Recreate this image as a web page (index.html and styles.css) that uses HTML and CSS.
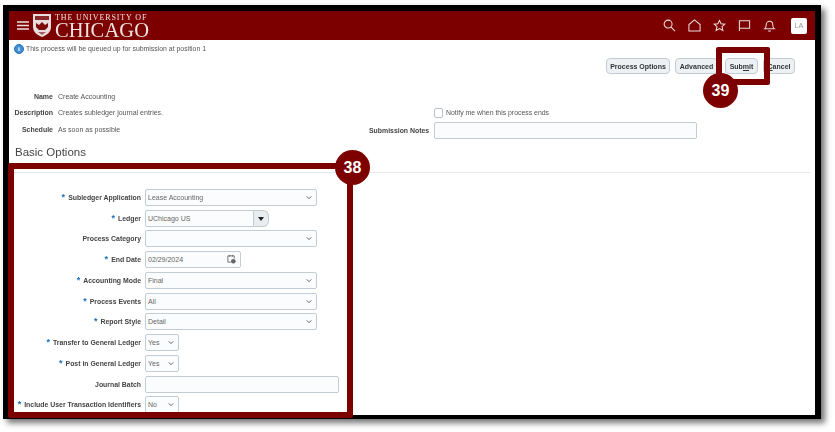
FILE: index.html
```html
<!DOCTYPE html>
<html lang="en">
<head>
<meta charset="utf-8">
<title>Create Accounting</title>
<link rel="stylesheet" href="styles.css">
</head>
<body>
<div class="frame">
  <header class="topbar">
    <div class="brand">
      <svg class="burger" viewBox="0 0 12 9"><path d="M0 1h12M0 4.500h12M0 8h12" stroke="#efe3e3" stroke-width="1.300" fill="none"/></svg>
      <svg class="crest" viewBox="0 0 20 25">
        <path d="M1 1h18v13c0 5-4 8-9 10C5 22 1 19 1 14z" fill="#e9dcdc"/>
        <path d="M3 3h14v4H3z" fill="#8a2a2a"/>
        <path d="M4 10l3 2 3-3 3 3 3-2v4l-3 3h-6l-3-3z" fill="#7c0a0a"/>
        <path d="M6 19h8l-4 3z" fill="#a56060"/>
      </svg>
      <div class="wordmark">
        <span class="wm-top">THE UNIVERSITY OF</span>
        <span class="wm-main">CHICAGO</span>
      </div>
    </div>
    <div class="tools">
      <svg class="tool" viewBox="0 0 14 14"><circle cx="5.500" cy="5.500" r="4.300"/><path d="M8.700 8.700L13 13"/></svg>
      <svg class="tool" viewBox="0 0 14 14"><path d="M1 13V6l6-5 6 5v7z"/></svg>
      <svg class="tool" viewBox="0 0 14 14"><path d="M7 1.500l1.700 3.700 4 .4-3 2.700.9 4L7 10.300l-3.600 2 .9-4-3-2.700 4-.4z"/></svg>
      <svg class="tool" viewBox="0 0 14 14"><path d="M1.500 13V2h11v8h-11"/></svg>
      <svg class="tool" viewBox="0 0 14 14"><path d="M2 10.500c1.500-1 1.500-2.500 1.500-4.500a3.500 3.500 0 0 1 7 0c0 2 0 3.500 1.500 4.500zM5.500 12.800h3"/></svg>
      <span class="avatar">LA</span>
    </div>
  </header>

  <main class="page">
    <div class="notice-row">
      <p class="notice"><span class="info-dot">i</span>This process will be queued up for submission at position 1</p>
      <div class="actions">
        <button class="btn btn-po">Process Options</button>
        <button class="btn btn-adv">Advanced</button>
        <button class="btn btn-sub">Sub<u>m</u>it</button>
        <button class="btn btn-can"><u>C</u>ancel</button>
      </div>
    </div>

    <section class="summary">
      <dl class="facts">
        <div class="fact"><dt>Name</dt><dd>Create Accounting</dd></div>
        <div class="fact"><dt>Description</dt><dd>Creates subledger journal entries.</dd></div>
        <div class="fact"><dt>Schedule</dt><dd>As soon as possible</dd></div>
      </dl>
      <div class="notes">
        <label class="notify"><span class="check"></span>Notify me when this process ends</label>
        <div class="notes-row"><span class="label">Submission Notes</span><span class="field notes-field"></span></div>
      </div>
    </section>

    <h2 class="section-title">Basic Options</h2>
    <div class="divider"></div>

    <form class="params">
      <div class="row"><span class="label"><b>*</b>Subledger Application</span><span class="field select wide">Lease Accounting<svg class="chev" viewBox="0 0 8 5"><path d="M1 1l3 3 3-3"/></svg></span></div>
      <div class="row"><span class="label"><b>*</b>Ledger</span><span class="combo"><span class="field combo-text">UChicago US</span><span class="combo-btn"></span></span></div>
      <div class="row"><span class="label">Process Category</span><span class="field select wide"><svg class="chev" viewBox="0 0 8 5"><path d="M1 1l3 3 3-3"/></svg></span></div>
      <div class="row"><span class="label"><b>*</b>End Date</span><span class="field date">02/29/2024<svg class="cal" viewBox="0 0 10 11"><path d="M1 2h7v3M1 2v7h3M3 1v2M6 1v2" fill="none" stroke="#666" stroke-width="1"/><circle cx="7" cy="8" r="2.600" fill="#666"/></svg></span></div>
      <div class="row"><span class="label"><b>*</b>Accounting Mode</span><span class="field select wide">Final<svg class="chev" viewBox="0 0 8 5"><path d="M1 1l3 3 3-3"/></svg></span></div>
      <div class="row"><span class="label"><b>*</b>Process Events</span><span class="field select wide">All<svg class="chev" viewBox="0 0 8 5"><path d="M1 1l3 3 3-3"/></svg></span></div>
      <div class="row"><span class="label"><b>*</b>Report Style</span><span class="field select wide">Detail<svg class="chev" viewBox="0 0 8 5"><path d="M1 1l3 3 3-3"/></svg></span></div>
      <div class="row"><span class="label"><b>*</b>Transfer to General Ledger</span><span class="field select tiny">Yes<svg class="chev" viewBox="0 0 8 5"><path d="M1 1l3 3 3-3"/></svg></span></div>
      <div class="row"><span class="label"><b>*</b>Post in General Ledger</span><span class="field select tiny">Yes<svg class="chev" viewBox="0 0 8 5"><path d="M1 1l3 3 3-3"/></svg></span></div>
      <div class="row"><span class="label">Journal Batch</span><span class="field batch"></span></div>
      <div class="row"><span class="label"><b>*</b>Include User Transaction Identifiers</span><span class="field select tiny">No<svg class="chev" viewBox="0 0 8 5"><path d="M1 1l3 3 3-3"/></svg></span></div>
    </form>
  </main>
</div>

<div class="callout callout-38"></div>
<div class="badge badge-38">38</div>
<div class="callout callout-39"></div>
<div class="badge badge-39">39</div>
</body>
</html>
```
FILE: styles.css
```css
* { box-sizing: border-box; }
html, body { margin: 0; padding: 0; background: #fff; }
body {
  position: relative;
  width: 835px;
  height: 432px;
  overflow: hidden;
  padding: 5px 0 0 3px;
  font-family: "Liberation Sans", Arial, sans-serif;
  color: #555;
}
.frame {
  width: 818px;
  height: 414px;
  border: solid #000;
  border-width: 6px 6px 4px 6px;
  background: #fff;
  box-shadow: 4px 4px 6px rgba(0, 0, 0, .55);
  overflow: hidden;
  filter: blur(.3px);
}
.topbar {
  height: 29px;
  background: #7d0000;
  display: flex;
  justify-content: space-between;
  align-items: center;
  padding: 0 8px 0 8px;
}
.brand { display: flex; align-items: center; }
.burger { width: 12px; height: 9px; margin-right: 3px; }
.crest { width: 20px; height: 25px; margin-right: 3px; }
.wordmark { display: flex; flex-direction: column; font-family: "Liberation Serif", serif; color: #efe3e3; }
.wm-top { font-size: 8px; line-height: 9px; letter-spacing: .87px; }
.wm-main { font-size: 20.5px; line-height: 17px; letter-spacing: .1px; }
.tools { display: flex; align-items: center; }
.tool {
  width: 13px;
  height: 13px;
  margin-right: 12px;
  fill: none;
  stroke: #eadede;
  stroke-width: 1.100;
}
.avatar {
  width: 16px;
  height: 16px;
  margin-left: 3px;
  background: #fff;
  border-radius: 2px;
  color: #999;
  font-size: 7.500px;
  text-align: center;
  line-height: 16px;
}
.page { padding: 0; }
.notice-row { display: flex; justify-content: space-between; height: 32px; }
.notice { margin: 4px 0 0 5px; height: 10px; font-size: 6.900px; line-height: 10px; display: flex; align-items: center; }
.info-dot {
  width: 10px;
  height: 10px;
  margin-right: 2px;
  border-radius: 50%;
  background: #3f8fd6;
  border: 1px solid #2b6fae;
  color: #fff;
  font: bold 7px/8px "Liberation Serif", serif;
  text-align: center;
}
.actions { display: flex; padding: 18px 20px 0 0; align-items: flex-start; }
.btn {
  height: 16px;
  padding: 0;
  border: 1px solid #c3ccd3;
  border-radius: 4px;
  background: #eef1f4;
  color: #333;
  font: bold 7px/13px "Liberation Sans", Arial, sans-serif;
}
.btn-po { width: 64px; margin-right: 5px; }
.btn-adv { width: 43px; margin-right: 7px; }
.btn-sub { width: 33px; margin-right: 5px; }
.btn-can { width: 32px; }
.summary { display: flex; height: 75px; padding-top: 16px; }
.facts { margin: 0; width: 360px; }
.fact { display: flex; height: 16.500px; align-items: center; font-size: 7px; }
.fact dt { width: 44px; text-align: right; font-weight: bold; color: #444; white-space: nowrap; direction: rtl; }
.fact dd { margin: 0 0 0 5px; white-space: nowrap; }
.notes { display: flex; flex-direction: column; padding-top: 18px; font-size: 6.900px; }
.notify { display: flex; align-items: center; height: 13px; margin: 0 0 3px 65px; }
.check { width: 9px; height: 10px; margin-right: 3px; border: 1px solid #b8c2ca; border-radius: 2px; background: #fff; }
.notes-row { display: flex; align-items: center; height: 16px; }
.notes-row .label { width: 60px; }
.notes-field { width: 263px; height: 16px; margin-left: 5px; }
.label { text-align: right; font-size: 6.900px; font-weight: bold; color: #444; white-space: nowrap; }
.label b { color: #1f6fb5; font-size: 9px; margin-right: 3px; line-height: 7px; }
.section-title { margin: -2px 0 0 6px; font-size: 11.500px; font-weight: normal; line-height: 15px; color: #444; height: 27px; }
.divider { height: 1px; margin-right: 5px; background: #e6e8ea; }
.params { padding-top: 14px; }
.row { display: grid; grid-template-columns: 132px auto; column-gap: 4px; justify-content: start; align-items: center; height: 20.750px; }
.field {
  position: relative;
  display: block;
  height: 17px;
  padding-left: 2px;
  background: #fbfcfd;
  border: 1px solid #c3ccd3;
  border-radius: 2px;
  font-size: 7px;
  line-height: 15px;
  color: #666;
}
.wide { width: 172px; }
.tiny { width: 34px; }
.batch { width: 194px; }
.date { width: 96px; }
.select { background: #fbfcfd; }
.chev { position: absolute; right: 4px; top: 5px; width: 6px; height: 5px; fill: none; stroke: #555; stroke-width: 1.200; }
.cal { position: absolute; right: 4px; top: 2px; width: 9px; height: 10px; }
.combo { display: flex; width: 124px; }
.combo-text { width: 109px; border-radius: 2px 0 0 2px; }
.combo-btn {
  position: relative;
  width: 15px;
  height: 17px;
  background: #e9edf0;
  border: 1px solid #c3ccd3;
  border-left: 0;
  border-radius: 0 6px 6px 0;
}
.combo-btn::after {
  content: "";
  position: absolute;
  left: 4px;
  top: 6px;
  border: 3px solid transparent;
  border-top: 4px solid #222;
  border-bottom: 0;
}
.callout { position: absolute; border: 6px solid #7d0000; border-radius: 2px; pointer-events: none; }
.callout-38 { left: 8px; top: 163px; width: 345px; height: 255px; }
.callout-39 { left: 716px; top: 47px; width: 54px; height: 38px; }
.badge {
  position: absolute;
  width: 35px;
  height: 35px;
  border-radius: 50%;
  background: #7d0000;
  color: #fff;
  font-size: 16px;
  font-weight: bold;
  line-height: 35px;
  text-align: center;
}
.badge-38 { left: 335px; top: 150px; }
.badge-39 { left: 703px; top: 73px; }
```
